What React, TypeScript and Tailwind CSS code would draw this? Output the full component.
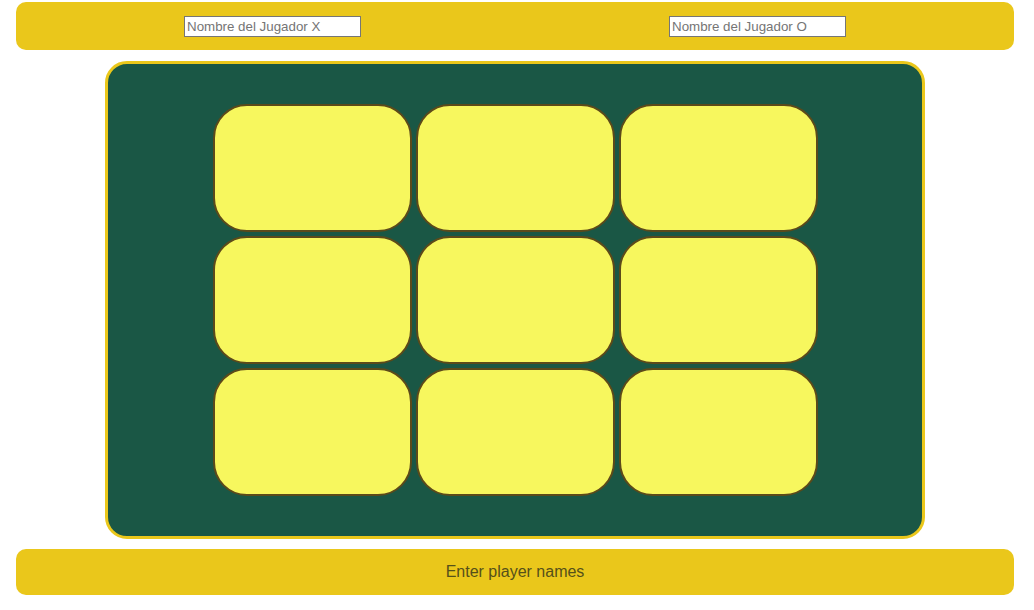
import React from "react";

export default function App() {
  const cells = Array.from({ length: 9 });
  return (
    <div
      className="w-[1034px] h-[610px] bg-white flex flex-col pt-[2px] pl-4 pr-5"
      style={{ fontFamily: '"Liberation Sans", Arial, sans-serif' }}
    >
      <div className="h-[48px] w-full bg-[#eac71b] rounded-[10px] flex items-center shrink-0">
        <input
          placeholder="Nombre del Jugador X"
          className="ml-[168px] w-[177px] h-[21px] bg-white border border-[#767676] px-[2px] text-[13.33px] text-black placeholder:text-[#757575] outline-none"
          style={{ fontFamily: '"Liberation Sans", Arial, sans-serif' }}
        />
        <input
          placeholder="Nombre del Jugador O"
          className="ml-[308px] w-[177px] h-[21px] bg-white border border-[#767676] px-[2px] text-[13.33px] text-black placeholder:text-[#757575] outline-none"
          style={{ fontFamily: '"Liberation Sans", Arial, sans-serif' }}
        />
      </div>
      <div className="mt-[11px] ml-[89px] w-[820px] h-[478px] bg-[#1a5745] border-[3px] border-[#eac71b] rounded-[22px] shrink-0 flex items-center justify-center">
        <div className="grid grid-cols-[199px_199px_199px] grid-rows-[128px_128px_128px] gap-[4px]">
          {cells.map((_, i) => (
            <div
              key={i}
              className="bg-[#f7f75e] border-2 border-[#5c4a1a] rounded-[34px]"
            />
          ))}
        </div>
      </div>
      <div className="mt-[10px] h-[46px] w-full bg-[#eac71b] rounded-[10px] flex items-center justify-center shrink-0">
        <span className="text-[16px] text-[#55501a]">Enter player names</span>
      </div>
    </div>
  );
}
